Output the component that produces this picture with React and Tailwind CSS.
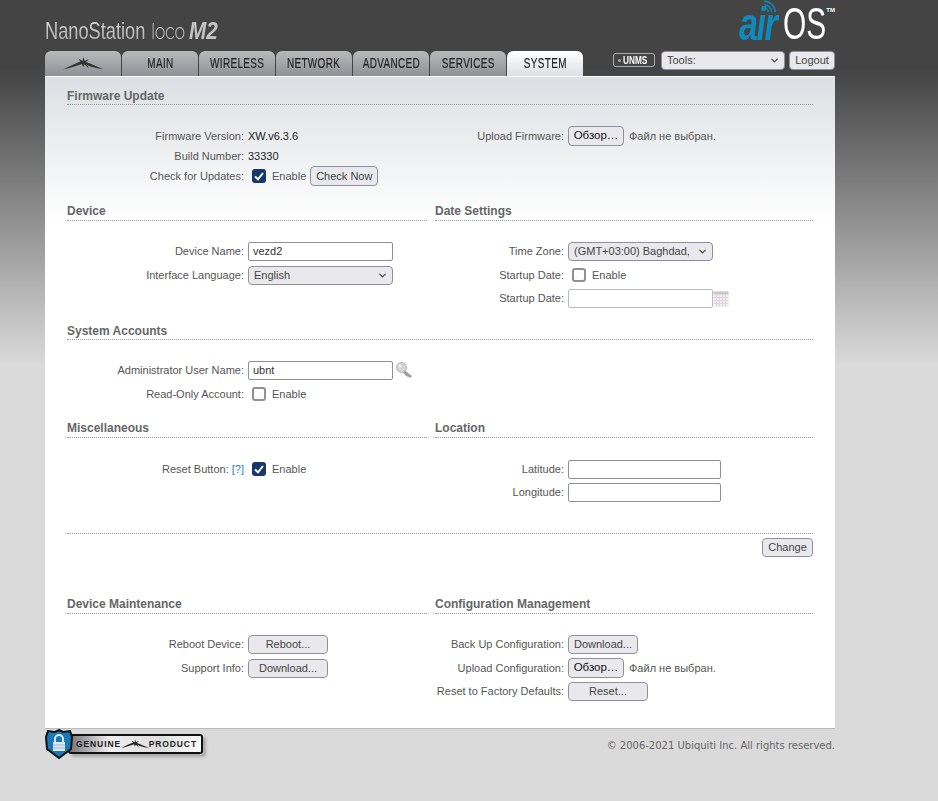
import { ChevronDown } from "lucide-react";

const tabs = ["MAIN", "WIRELESS", "NETWORK", "ADVANCED", "SERVICES"];

const tabClass =
  "flex h-[25px] w-[76px] items-center justify-center rounded-t-[6px] text-[14px] tracking-[0.5px] text-[#222] [-webkit-text-stroke:0.2px_#222]";

const UbntLogo = ({ className, fill = "#333" }) => (
  <svg viewBox="0 0 40 13" className={className}>
    <path
      fill={fill}
      d="M0 12.5 C6 9.5 12 6.5 17.5 4.5 L15.5 1.5 L19.5 4 L20.5 0 L21.5 4 L26 2 L23 5 C28 7 34 9.5 40 12 C34 11.5 28 10 24 8 L26 11.5 L21.5 7.5 L20 10 L19 7 C13 9 7 11 0 12.5 Z"
    />
  </svg>
);

const Heading = ({ children, h = "h-[20px]" }) => (
  <div className={`flex items-center border-b border-dotted border-[#999] text-[12px] font-bold text-[#666] ${h}`}>
    {children}
  </div>
);

const Row = ({ label, right, h = "h-[24px]", children }) => (
  <div className={`flex items-center gap-[4px] ${h}`}>
    <div className={`shrink-0 text-right text-[#555] ${right ? "w-[129px]" : "w-[177px]"}`}>
      {label}
    </div>
    <div className="flex items-center">{children}</div>
  </div>
);

const Btn = ({ children, className = "" }) => (
  <button
    type="button"
    className={`rounded-[4px] border border-[#8f8f9d] bg-[#e9e9ed] leading-none ${className}`}
  >
    {children}
  </button>
);

const Check = ({ checked }) => (
  <span
    className={`ml-[4px] mr-[6px] flex h-[14px] w-[14px] items-center justify-center rounded-[3px] ${
      checked ? "bg-[#15386b]" : "border-2 border-[#8f8f9d] bg-white"
    }`}
  >
    {checked && (
      <svg viewBox="0 0 14 14" className="h-[14px] w-[14px]">
        <path d="M3 7.5 L6 10.3 L11 4" fill="none" stroke="#fff" strokeWidth="2" />
      </svg>
    )}
  </span>
);

const Enable = ({ checked }) => (
  <>
    <Check checked={checked} />
    <span className="text-[#555]">Enable</span>
  </>
);

const Text = ({ className = "w-[145px]", value = "", disabled }) => (
  <input
    type="text"
    defaultValue={value}
    disabled={disabled}
    className={`h-[19px] rounded-[2px] border bg-white px-[4px] text-[11px] text-[#333] outline-none ${
      disabled ? "border-[#bbb]" : "border-[#8f8f9d]"
    } ${className}`}
  />
);

const Select = ({ value, className = "" }) => (
  <div className={`relative h-[19px] ${className}`}>
    <select className="h-full w-full appearance-none overflow-hidden rounded-[4px] border border-[#8f8f9d] bg-[#e9e9ed] pl-[5px] pr-[20px] text-[11px] text-[#444] outline-none">
      <option>{value}</option>
    </select>
    <ChevronDown
      size={11}
      strokeWidth={2.5}
      className="pointer-events-none absolute right-[5px] top-[4px] text-[#444]"
    />
  </div>
);

const FilePick = () => (
  <>
    <Btn className="h-[20px] w-[56px] text-[11.5px] text-[#111]">Обзор…</Btn>
    <span className="ml-[5px] text-[#555]">Файл не выбран.</span>
  </>
);

const KeyIcon = () => (
  <svg viewBox="0 0 16 16" className="ml-[3px] h-[16px] w-[16px]">
    <path d="M8 8 L15.5 14 L14.5 15.5 L13 14.5 L12 15 L11 13.5 L10 13.5 L6.5 9.5 Z" fill="#9c9c9c" stroke="#8a8a8a" strokeWidth="0.5" />
    <circle cx="5.5" cy="5.5" r="5" fill="#d4d4d4" stroke="#a8a8a8" strokeWidth="0.8" />
    <circle cx="4" cy="4" r="1.4" fill="#f6f6f6" />
  </svg>
);

const CalendarIcon = () => (
  <svg viewBox="0 0 16 16" className="h-[16px] w-[16px]">
    <rect x="0.5" y="0.5" width="15" height="15" fill="#f0eef0" />
    <rect x="0.5" y="0.5" width="15" height="3" fill="#c8c8c8" />
    <path
      d="M0.5 6.5H15.5M0.5 9.5H15.5M0.5 12.5H15.5M3.5 4V16M6.5 4V16M9.5 4V16M12.5 4V16"
      stroke="#ddd6dd"
      strokeWidth="1"
    />
  </svg>
);

const AirOsLogo = () => (
  <div className="relative flex h-[44px] w-[96px] items-start">
    <div className="mt-[4px] w-[39px]">
      <span className="inline-block origin-left scale-x-[0.74] whitespace-nowrap text-[46px] font-bold italic leading-[40px] tracking-[-2px] text-[#0f8abd]">
        air
      </span>
    </div>
    <div className="ml-[5px] mt-[4px] w-[44px]">
      <span className="inline-block origin-left scale-x-[0.68] whitespace-nowrap text-[44px] leading-[40px] text-white">
        OS
      </span>
    </div>
    <span className="absolute right-0 top-[7px] text-[6px] font-bold leading-none text-white">TM</span>
    <svg viewBox="0 0 16 16" className="absolute left-[24px] top-0 h-[13px] w-[14px]">
      <path
        d="M1 6 A9 9 0 0 1 10 15 M1 1.5 A13.5 13.5 0 0 1 14.5 15 M1 10 A5 5 0 0 1 6 15"
        fill="none"
        stroke="#0f8abd"
        strokeWidth="1.8"
      />
    </svg>
  </div>
);

const Shield = () => (
  <svg viewBox="0 0 28 30" className="relative z-10 -mr-[5px] h-[30px] w-[28px]">
    <path
      d="M14 1 L18 3 L25 2 L27 8 L26 20 L14 29 L2 20 L1 8 L3 2 L10 3 Z"
      fill="#1779b5"
      stroke="#111"
      strokeWidth="2"
    />
    <path d="M10 13 V10 A4 4 0 0 1 18 10 V13" fill="none" stroke="#dfe8ee" strokeWidth="2" />
    <rect x="8" y="13" width="12" height="9" fill="#dfe8ee" />
    <path d="M8 16H20M8 19H20" stroke="#8fb9d3" strokeWidth="1" />
  </svg>
);

export default function App() {
  return (
    <div className="min-h-[801px] bg-[linear-gradient(#444_0,#444_70px,#dadada_365px)] font-['Liberation_Sans',Arial,sans-serif] text-[11px]">
      <div className="ml-[45px] w-[790px]">
        <div className="flex h-[51px] items-start justify-between">
          <div className="mt-[19px] flex items-baseline">
            <div className="w-[106px]">
              <span className="inline-block origin-left scale-x-[0.76] whitespace-nowrap bg-[linear-gradient(#e2e2e2,#a8a8a8)] bg-clip-text text-[24px] leading-[24px] text-transparent">
                NanoStation
              </span>
            </div>
            <div className="w-[38px]">
              <span className="inline-block origin-left scale-x-[0.87] whitespace-nowrap font-['Inter',sans-serif] text-[22px] font-extralight leading-[24px] tracking-[-1px] text-[#c4c4c4]">
                loco
              </span>
            </div>
            <div className="w-[30px]">
              <span className="inline-block origin-left scale-x-[0.9] whitespace-nowrap text-[23px] font-bold italic leading-[24px] text-[#c4c4c4]">
                M2
              </span>
            </div>
          </div>
          <AirOsLogo />
        </div>

        <div className="flex h-[25px] items-start justify-between">
          <div className="flex gap-[1px]">
            <div className={`${tabClass} bg-[linear-gradient(#b9b9bb,#8e9195)]`}>
              <UbntLogo className="h-[13px] w-[40px]" />
            </div>
            {tabs.map((tab) => (
              <div key={tab} className={`${tabClass} bg-[linear-gradient(#b9b9bb,#8e9195)]`}>
                <span className="inline-block scale-x-[0.71]">{tab}</span>
              </div>
            ))}
            <div className={`${tabClass} bg-[linear-gradient(#fff,#dcdfe3)]`}>
              <span className="inline-block scale-x-[0.71]">SYSTEM</span>
            </div>
          </div>
          <div className="flex items-start">
            <div className="mt-[2px] flex h-[14px] w-[42px] items-center rounded-[3px] border border-[#aaa] pl-[4px] text-white">
              <span className="h-[3px] w-[3px] shrink-0 rounded-full bg-[#aaa]" />
              <span className="ml-[2px] inline-block w-[26px]">
                <span className="inline-block origin-left scale-x-[0.75] whitespace-nowrap text-[11px] font-bold leading-none">
                  UNMS
                </span>
              </span>
            </div>
            <Select value="Tools:" className="ml-[6px] w-[124px]" />
            <Btn className="ml-[4px] h-[19px] w-[46px] text-[11px] text-[#444]">Logout</Btn>
          </div>
        </div>

        <div className="border-b border-t border-b-[#bbb] border-t-white bg-[linear-gradient(#dcdfe3,#fff_145px)] px-[22px] pb-[25px] pt-[8px]">
          <Heading h="h-[20px] pt-[2px]">Firmware Update</Heading>
          <div className="grid grid-cols-[360px_378px] gap-x-[8px] pt-[21px]">
            <div>
              <Row label="Firmware Version:" h="h-[20px]">
                <span className="text-[#222]">XW.v6.3.6</span>
              </Row>
              <Row label="Build Number:" h="h-[20px]">
                <span className="text-[#222]">33330</span>
              </Row>
              <Row label="Check for Updates:" h="h-[20px]">
                <Enable checked />
                <Btn className="ml-[4px] h-[20px] w-[68px] text-[11px] text-[#444]">Check Now</Btn>
              </Row>
            </div>
            <div>
              <Row right label="Upload Firmware:" h="h-[20px]">
                <FilePick />
              </Row>
            </div>
          </div>

          <div className="mt-[15px] grid grid-cols-[360px_378px] gap-x-[8px]">
            <div>
              <Heading>Device</Heading>
              <div className="pt-[18px]">
                <Row label="Device Name:">
                  <Text value="vezd2" />
                </Row>
                <Row label="Interface Language:">
                  <Select value="English" className="w-[145px]" />
                </Row>
              </div>
            </div>
            <div>
              <Heading>Date Settings</Heading>
              <div className="pt-[18px]">
                <Row right label="Time Zone:">
                  <Select value="(GMT+03:00) Baghdad, Kuwait, Riyadh" className="w-[145px]" />
                </Row>
                <Row right label="Startup Date:">
                  <Enable />
                </Row>
                <Row right label="Startup Date:" h="h-[23px]">
                  <Text disabled />
                  <CalendarIcon />
                </Row>
              </div>
            </div>
          </div>

          <div className="mt-[10px]">
            <Heading h="h-[20px] pt-[2px]">System Accounts</Heading>
            <div className="pt-[18px]">
              <Row label="Administrator User Name:">
                <Text value="ubnt" />
                <KeyIcon />
              </Row>
              <Row label="Read-Only Account:">
                <Enable />
              </Row>
            </div>
          </div>

          <div className="mt-[12px] grid grid-cols-[360px_378px] gap-x-[8px]">
            <div>
              <Heading>Miscellaneous</Heading>
              <div className="pt-[19px]">
                <Row
                  label={
                    <>
                      Reset Button: <span className="text-[#2b7fc0]">[?]</span>
                    </>
                  }
                >
                  <Enable checked />
                </Row>
              </div>
            </div>
            <div>
              <Heading>Location</Heading>
              <div className="pt-[19px]">
                <Row right label="Latitude:">
                  <Text className="w-[153px]" />
                </Row>
                <Row right label="Longitude:" h="h-[23px]">
                  <Text className="w-[153px]" />
                </Row>
              </div>
            </div>
          </div>

          <div className="mt-[29px] flex justify-end border-t border-dotted border-[#999] pt-[4px]">
            <Btn className="h-[19px] w-[51px] text-[11px] text-[#444]">Change</Btn>
          </div>

          <div className="mt-[37px] grid grid-cols-[360px_378px] gap-x-[8px]">
            <div>
              <Heading>Device Maintenance</Heading>
              <div className="pt-[18px]">
                <Row label="Reboot Device:">
                  <Btn className="h-[19px] w-[80px] text-[11px] text-[#444]">Reboot...</Btn>
                </Row>
                <Row label="Support Info:">
                  <Btn className="h-[19px] w-[80px] text-[11px] text-[#444]">Download...</Btn>
                </Row>
              </div>
            </div>
            <div>
              <Heading>Configuration Management</Heading>
              <div className="pt-[18px]">
                <Row right label="Back Up Configuration:">
                  <Btn className="h-[19px] w-[70px] text-[11px] text-[#444]">Download...</Btn>
                </Row>
                <Row right label="Upload Configuration:">
                  <FilePick />
                </Row>
                <Row right label="Reset to Factory Defaults:" h="h-[23px]">
                  <Btn className="h-[19px] w-[80px] text-[11px] text-[#444]">Reset...</Btn>
                </Row>
              </div>
            </div>
          </div>
        </div>

        <div className="flex items-center justify-between">
          <div className="flex items-center">
            <Shield />
            <div className="flex h-[20px] w-[135px] items-center justify-between rounded-[3px] border-2 border-[#111] bg-[linear-gradient(90deg,#777,#eee_30%,#ddd_70%,#fff)] pl-[6px] pr-[4px] text-[8.5px] font-bold tracking-[0.9px] text-[#222] shadow-[3px_3px_3px_#aaa]">
              <span>GENUINE</span>
              <UbntLogo className="h-[10px] w-[28px]" fill="#222" />
              <span>PRODUCT</span>
            </div>
          </div>
          <span className="pt-[3px] font-['DejaVu_Sans',sans-serif] text-[10px] text-[#666]">
            © 2006-2021 Ubiquiti Inc. All rights reserved.
          </span>
        </div>
      </div>
    </div>
  );
}
